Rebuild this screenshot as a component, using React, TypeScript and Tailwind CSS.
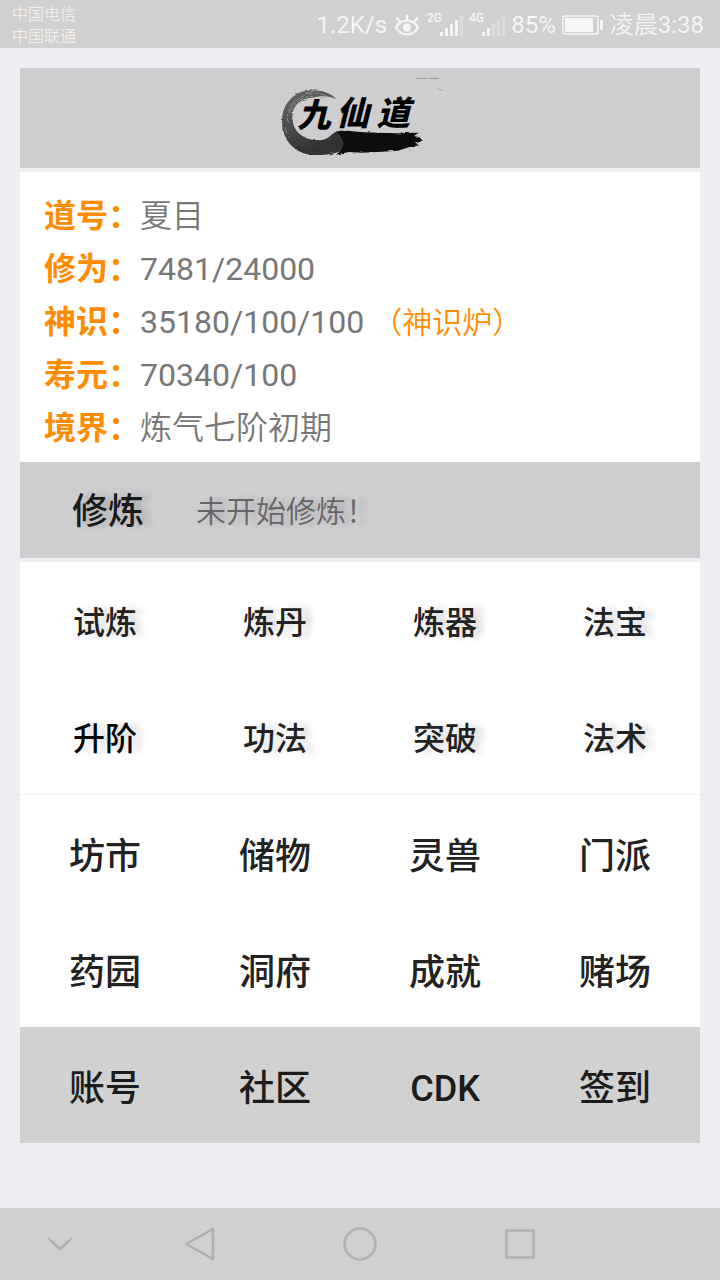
import { useState } from "react";

const stats = [
  { label: "道号", value: "夏目" },
  { label: "修为", value: "7481/24000" },
  { label: "神识", value: "35180/100/100", action: "（神识炉）" },
  { label: "寿元", value: "70340/100" },
  { label: "境界", value: "炼气七阶初期" },
];

const skillMenu = ["试炼", "炼丹", "炼器", "法宝", "升阶", "功法", "突破", "法术"];
const placeMenu = ["坊市", "储物", "灵兽", "门派", "药园", "洞府", "成就", "赌场"];
const footerMenu = ["账号", "社区", "CDK", "签到"];

// Signal bars, "active" is how many of the five are lit
const Signal = ({ label, active }: { label: string; active: number }) => (
  <svg width="36" height="26" viewBox="0 0 36 26" fill="#f5f5f5">
    <text x="0" y="10" fontSize="12" fontWeight="500" fontFamily="Roboto, sans-serif">
      {label}
    </text>
    {[0, 1, 2, 3, 4].map((i) => (
      <rect
        key={i}
        x={13 + i * 5}
        y={20 - i * 4}
        width="3"
        height={4 + i * 4}
        opacity={i < active ? 1 : 0.35}
      />
    ))}
  </svg>
);

const StatusBar = () => (
  <header className="flex h-12 items-center justify-between bg-[#d0d0d0] pl-3 pr-4 text-[#f5f5f5]">
    <div className="pt-1 text-base leading-[22px] font-light">
      <p>中国电信</p>
      <p>中国联通</p>
    </div>
    <div className="flex items-center gap-[6px] pt-0.5 text-2xl">
      <span>1.2K/s</span>
      <svg width="28" height="24" viewBox="0 0 28 24" fill="none" stroke="#f5f5f5" strokeWidth="2.4">
        <path d="M3 14.5C6 9.5 10 7.5 14 7.5s8 2 11 7c-3 5-7 7-11 7s-8-2-11-7z" />
        <path d="M14 7V2M7 9L3.500 4.500M21 9l3.500-4.500" />
        <circle cx="14" cy="14.500" r="4" fill="#f5f5f5" stroke="none" />
      </svg>
      <Signal label="2G" active={4} />
      <Signal label="4G" active={2} />
      <span>85%</span>
      <svg width="42" height="20" viewBox="0 0 42 20" fill="none">
        <rect x="1" y="1" width="35" height="18" rx="2" stroke="#f5f5f5" strokeWidth="1.500" />
        <rect x="3" y="3" width="28" height="14" fill="#f5f5f5" />
        <rect x="38" y="5" width="3" height="10" rx="1" fill="#f5f5f5" />
      </svg>
      <span>
        <span className="font-[350]">凌晨</span>3:38
      </span>
    </div>
  </header>
);

const Logo = () => (
  <svg width="200" height="100" viewBox="0 12 600 300" role="img" aria-label="九仙道">
    <defs>
      <linearGradient id="ink" x1="0" y1="0" x2="0.4" y2="1">
        <stop offset="0" stopColor="#6c6c6e" />
        <stop offset="0.5" stopColor="#4c4c4e" />
        <stop offset="1" stopColor="#303032" />
      </linearGradient>
      <filter id="brush" x="-5%" y="-15%" width="110%" height="130%">
        <feTurbulence type="fractalNoise" baseFrequency="0.04 0.12" numOctaves="2" seed="4" />
        <feDisplacementMap in="SourceGraphic" scale="8" />
      </filter>
    </defs>
    <g filter="url(#brush)">
      <path
        fill="url(#ink)"
        d="M229 106C214 86 180 76 148 79C96 84 66 124 66 172C66 228 104 270 158 273C196 275 230 268 250 258L250 200C234 198 222 204 208 218C190 234 150 232 124 214C102 198 94 172 98 146C104 116 130 102 158 101C184 96 206 94 229 106Z"
      />
      <path
        fill="none"
        stroke="#a9a9ab"
        strokeWidth="2"
        strokeDasharray="22 7 9 5"
        d="M82 172C80 130 106 96 154 91M90 150C96 118 122 98 160 97M138 88C166 84 190 90 208 101M76 190C78 202 82 212 88 220"
      />
      <path
        fill="#0b0f0d"
        d="M228 204L262 200L300 204L352 206L410 208L476 206L462 216L478 220L488 230L468 238L476 244L446 250L414 260L352 264L304 266L266 264L228 272L246 256C254 238 250 218 228 204Z"
      />
    </g>
    <path stroke="#77777a" strokeWidth="2" d="M470 43h30M506 43h30" />
    <path stroke="#a9a9ad" strokeWidth="3" d="M532 74l16 5" />
    <g
      fill="#000"
      fontSize="100"
      fontWeight="900"
      fontStyle="italic"
      fontFamily="'Noto Sans CJK SC', sans-serif"
    >
      <text x="112" y="190">九</text>
      <text x="228" y="184">仙</text>
      <text x="350" y="182">道</text>
    </g>
  </svg>
);

const NavBar = () => (
  <nav className="mt-auto flex h-18 items-stretch bg-[#d0d0d0] text-[#b0b0b0]">
    <button aria-label="收起" className="flex flex-[3] items-center justify-center">
      <svg width="28" height="16" viewBox="0 0 28 16" fill="none" stroke="currentColor" strokeWidth="2.500">
        <path d="M2 2l12 11L26 2" />
      </svg>
    </button>
    <button aria-label="返回" className="flex flex-[4] items-center justify-center">
      <svg width="32" height="36" viewBox="0 0 32 36" fill="none" stroke="currentColor" strokeWidth="2.500" strokeLinejoin="round">
        <path d="M29 3v30L2 18z" />
      </svg>
    </button>
    <button aria-label="主页" className="flex flex-[4] items-center justify-center">
      <svg width="36" height="36" viewBox="0 0 36 36" fill="none" stroke="currentColor" strokeWidth="2.500">
        <circle cx="18" cy="18" r="15.500" />
      </svg>
    </button>
    <button aria-label="最近任务" className="flex flex-[4] items-center justify-center">
      <svg width="32" height="32" viewBox="0 0 32 32" fill="none" stroke="currentColor" strokeWidth="2.500">
        <rect x="2.500" y="2.500" width="27" height="27" rx="1" />
      </svg>
    </button>
    <div className="flex-[3]"></div>
  </nav>
);

const App = () => {
  const [active, setActive] = useState("升阶");

  return (
    <div className="flex min-h-screen flex-col bg-[#efeef3] font-[Roboto,'Noto_Sans_CJK_SC',sans-serif]">
      <StatusBar />

      <main className="mx-5 mt-5 mb-16">
        <div className="flex h-25 justify-center bg-[#cecdd0]">
          <Logo />
        </div>

        {/* Character info */}
        <dl className="mt-1 bg-white px-6 pt-[18px] pb-[7px] text-[32px] leading-[53px]">
          {stats.map((item) => (
            <div key={item.label} className="flex">
              <dt className="font-bold text-[#ff8c00]">{item.label}：</dt>
              <dd className="flex text-[#777777]">
                <span className={/\d/.test(item.value) ? "" : "font-[350]"}>{item.value}</span>
                {item.action && (
                  <button className="ml-2 text-[30px] font-[350] text-[#ff8c00]">
                    {item.action}
                  </button>
                )}
              </dd>
            </div>
          ))}
        </dl>

        {/* Training */}
        <div className="flex h-24 items-center gap-13 bg-[#cecdd0] pl-13">
          <button className="pt-1 text-4xl font-medium text-[#1a1a1a] [text-shadow:8px_0_6px_rgba(0,0,0,0.16)]">
            修炼
          </button>
          <span className="pt-0.5 text-[30px] font-[350] text-[#666666] [text-shadow:8px_0_6px_rgba(0,0,0,0.16)]">
            未开始修炼！
          </span>
        </div>

        <div className="mt-1 grid grid-cols-4 border-b border-[#efeef3] bg-white text-[32px] font-medium text-[#222222]">
          {skillMenu.map((name) => (
            <button
              key={name}
              onClick={() => setActive(name)}
              className={`h-29 pt-1.5 [text-shadow:8px_0_6px_rgba(0,0,0,0.16)] ${name === active ? "text-black" : ""}`}
            >
              {name}
            </button>
          ))}
        </div>

        <div className="grid grid-cols-4 bg-white text-4xl font-medium text-[#222222]">
          {placeMenu.map((name) => (
            <button key={name} className="h-29 pt-2">
              {name}
            </button>
          ))}
        </div>

        <div className="grid grid-cols-4 bg-[#d1d1d1] text-4xl font-medium text-[#1c1c1c]">
          {footerMenu.map((name) => (
            <button key={name} className="h-29 pt-2">
              {name}
            </button>
          ))}
        </div>
      </main>

      <NavBar />
    </div>
  );
};

export default App;
